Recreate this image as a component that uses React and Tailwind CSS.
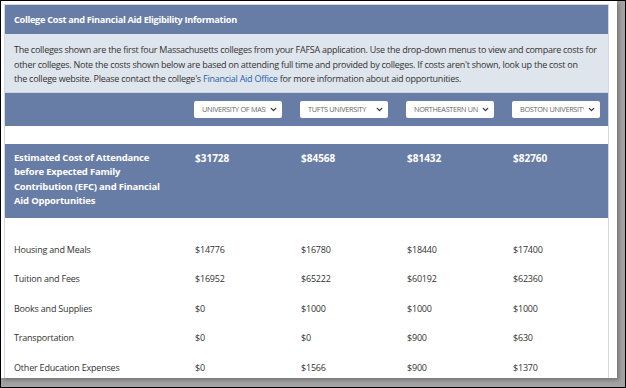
import { ChevronDown } from 'lucide-react';

const colleges = ['UNIVERSITY OF MASSACHUSETTS', 'TUFTS UNIVERSITY', 'NORTHEASTERN UNIVERSITY', 'BOSTON UNIVERSITY'];
const totals = ['$31728', '$84568', '$81432', '$82760'];
const rows = [
    ['Housing and Meals', '$14776', '$16780', '$18440', '$17400'],
    ['Tuition and Fees', '$16952', '$65222', '$60192', '$62360'],
    ['Books and Supplies', '$0', '$1000', '$1000', '$1000'],
    ['Transportation', '$0', '$0', '$900', '$630'],
    ['Other Education Expenses', '$0', '$1566', '$900', '$1370'],
];

const cols = 'grid grid-cols-[181px_106px_106px_106px_1fr]';

export default function App() {
    return (
        <div className="w-[626px] h-[388px] border border-black bg-[#a3a3a3] overflow-hidden font-['Segoe_UI','Open_Sans',sans-serif]">
            <div className="w-[616px] h-[377px] bg-white pt-[3px] pl-[3px] shadow-[2px_2px_4px_rgba(0,0,0,0.3)]">
                <div className="w-[605px] h-[374px] border-l border-t border-r border-[#d3d9e2] overflow-hidden">

                    {/* Title */}
                    <div className="h-[29px] bg-[#687da6] px-[9px] flex items-center">
                        <h1 className="text-white font-bold text-[9.2px] tracking-[-0.3px] pt-[1px]">College Cost and Financial Aid Eligibility Information</h1>
                    </div>

                    {/* Intro */}
                    <div className="bg-[#dfe5ec] px-[9px] pt-[9px] pb-[5px] text-[9px] leading-[14.5px] tracking-[-0.25px] text-[#333] border-b border-[#cdd5df] whitespace-nowrap">
                        <p>
                            The colleges shown are the first four Massachusetts colleges from your FAFSA application. Use the drop-down menus to view and compare costs for<br />
                            other colleges. Note the costs shown below are based on attending full time and provided by colleges. If costs aren't shown, look up the cost on<br />
                            the college website. Please contact the college's <span className="text-[#1f5fa8]">Financial Aid Office</span> for more information about aid opportunities.
                        </p>
                    </div>

                    {/* Dropdowns */}
                    <div className={`${cols} h-[33px] bg-[#687da6] px-[9px] items-center`}>
                        <div></div>
                        {colleges.map((c) => (
                            <div key={c} className="w-[88px] h-[17px] bg-white rounded-[2px] flex items-center pl-[8px] pr-[4px] -ml-[1px]">
                                <span className="flex-1 overflow-hidden whitespace-nowrap text-[7.3px] text-[#666] tracking-[-0.3px]">{c}</span>
                                <ChevronDown className="w-[9px] h-[9px] text-[#333] ml-[3px]" strokeWidth={3.5} />
                            </div>
                        ))}
                    </div>

                    <div className="h-[18px] bg-white"></div>

                    {/* Totals */}
                    <div className={`${cols} h-[74px] bg-[#687da6] px-[9px] py-[7px] text-white font-bold text-[9.5px] leading-[14.5px] tracking-[-0.2px]`}>
                        <div className="whitespace-nowrap">
                            Estimated Cost of Attendance<br />
                            before Expected Family<br />
                            Contribution (EFC) and Financial<br />
                            Aid Opportunities
                        </div>
                        {totals.map((t) => (
                            <div key={t} className="text-[10px] tracking-normal">{t}</div>
                        ))}
                    </div>

                    {/* Rows */}
                    <div className="pt-[17px] px-[9px] text-[9px] tracking-[-0.2px] text-[#333]">
                        {rows.map((r) => (
                            <div key={r[0]} className={`${cols} h-[29.6px] items-center`}>
                                {r.map((v, i) => (
                                    <div key={i}>{v}</div>
                                ))}
                            </div>
                        ))}
                    </div>

                </div>
            </div>
        </div>
    );
}
